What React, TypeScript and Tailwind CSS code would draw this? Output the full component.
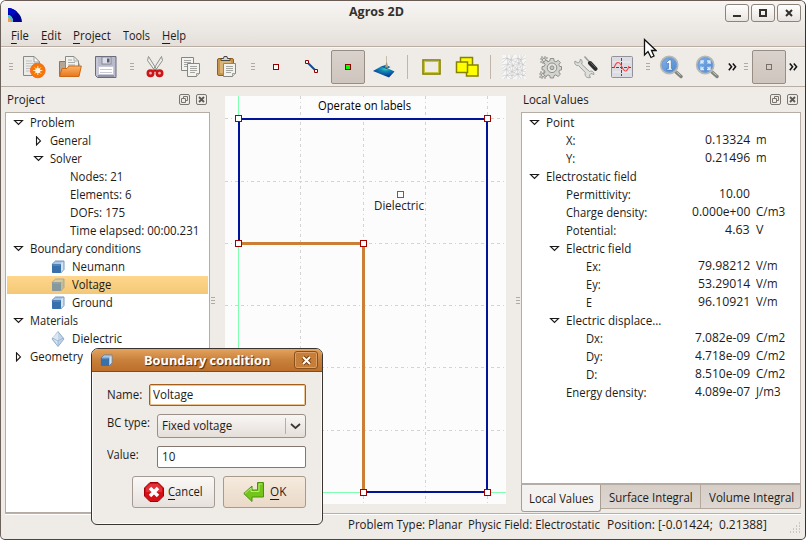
import { useLayoutEffect, useRef, type ReactNode } from "react";

/* Single-line text condensed or stretched horizontally to a given width. */
function T({ w, children, className = "" }: { w: number; children: ReactNode; className?: string }) {
  const ref = useRef<HTMLSpanElement>(null);
  useLayoutEffect(() => {
    const el = ref.current;
    if (el) el.style.transform = `scaleX(${w / el.offsetWidth})`;
  }, [w]);
  return (
    <span className={`inline-block shrink-0 whitespace-pre ${className}`} style={{ width: w }}>
      <span ref={ref} className="inline-block origin-left whitespace-pre">{children}</span>
    </span>
  );
}

const Key = ({ children }: { children: ReactNode }) => (
  <span className="underline decoration-1 underline-offset-[3px]">{children}</span>
);

const Grip = ({ className }: { className: string }) => (
  <div className={`flex shrink-0 items-center ${className}`}>
    <div className="flex w-1 flex-col gap-[2px]">
      <div className="h-px bg-[#b3a9a0]" />
      <div className="h-px bg-[#b3a9a0]" />
      <div className="h-px bg-[#b3a9a0]" />
    </div>
  </div>
);

const Slot = ({ children, pressed }: { children: ReactNode; pressed?: boolean }) => (
  <div className="flex w-9 shrink-0 items-center justify-center">
    {pressed ? (
      <div className="flex h-[34px] w-[34px] items-center justify-center rounded-[2px] border border-[#978d84] bg-linear-to-b from-[#d9d1cb] to-[#cec5be]">{children}</div>
    ) : children}
  </div>
);

const Sep = () => (
  <div className="flex w-[11px] shrink-0 items-center justify-center"><div className="h-6 w-px bg-[#c0b5ab]" /></div>
);

const Doc = ({ x = 0, y = 0, h = 15 }: { x?: number; y?: number; h?: number }) => (
  <g transform={`translate(${x} ${y})`}>
    <path d={`M.5 .5H12.5V${h - 3.5}L9.5 ${h - .5}H.5Z`} fill="#f2f2f0" stroke="#858780" />
    <path d="M3 3.500h7M3 5.500h7M3 7.500h7M3 9.500h5" stroke="#a4a5a1" />
    <path d={`M9.5 ${h - .5}v-3h3`} fill="#d5d6d2" stroke="#858780" strokeWidth=".7" />
  </g>
);

const NewIcon = () => (
  <svg width="24" height="24" viewBox="0 0 24 24">
    <path d="M1.500 1.500H12L17.500 7V20.500H1.500Z" fill="#ebebe9" stroke="#888a85" />
    <path d="M12 1.500V7H17.500Z" fill="#fff" stroke="#888a85" strokeWidth=".8" />
    <path d="M4 6h6M4 8.500h10M4 11h9M4 13.500h8M4 16h8" stroke="#c1c2bf" />
    <circle cx="15.800" cy="15.500" r="7.300" fill="#f57900" stroke="#ff6422" />
    <circle cx="15.800" cy="15.500" r="2.600" fill="#fff4e6" />
    <path d="M15.800 11v9M11.300 15.500h9M12.700 12.400l6.200 6.200M18.900 12.400l-6.200 6.200" stroke="#fff4e6" strokeWidth=".9" />
  </svg>
);
const OpenIcon = () => (
  <svg width="24" height="24" viewBox="0 0 24 24">
    <defs><linearGradient id="fold" x2="0" y2="1"><stop stopColor="#fbb46a" /><stop offset="1" stopColor="#e9751a" /></linearGradient></defs>
    <path d="M1.500 20.500V6.500H7l2 2h12v12Z" fill="#b5a595" stroke="#937454" />
    <path d="M7.500 13V1.500H16L20.500 6v8" fill="#f1f1ef" stroke="#888a85" />
    <path d="M16 1.500V6h4.500M10 5h4M10 7.500h7M10 10h7" fill="none" stroke="#aaaaa6" />
    <path d="M1.500 21.500L4 13.500H9L11 11H23.300L21 21.500Z" fill="url(#fold)" stroke="#cb6915" />
  </svg>
);
const SaveIcon = () => (
  <svg width="24" height="24" viewBox="0 0 24 24">
    <path d="M2 1.500H22V22.500H3.500L1.500 20.500V1.500Z" fill="#b9bacb" stroke="#696a7a" />
    <path d="M3 3V20" stroke="#d7d8e5" />
    <rect x="8" y="2" width="9" height="7" fill="#dddee9" stroke="#77788a" strokeWidth=".8" />
    <rect x="13" y="3.500" width="2.500" height="4" fill="#5a5c70" />
    <rect x="4.500" y="11.500" width="15" height="8" fill="#fff" stroke="#c9c9d5" />
    <path d="M6 14.500h12M6 17.500h12" stroke="#c9c9d5" />
    <path d="M4 21h16" stroke="#84869b" strokeWidth="1.500" />
  </svg>
);
const CutIcon = () => (
  <svg width="24" height="24" viewBox="0 0 24 24">
    <path d="M5.500 1.500L14 15l-2 1L4.500 5.500Z M18.500 1.500L10 15l2 1L19.500 5.500Z" fill="#eeeeec" stroke="#858780" strokeWidth=".9" />
    <g fill="#e8b2b0" stroke="#cc1518" strokeWidth="2.600"><circle cx="7.500" cy="18.200" r="2.700" /><circle cx="16.500" cy="18.200" r="2.700" /></g>
    <path d="M10 16l2-2 2 2-2 1z" fill="#b81114" />
  </svg>
);
const CopyIcon = () => (
  <svg width="24" height="24" viewBox="0 0 24 24"><Doc x={2} y={2} h={14} /><Doc x={8} y={8} h={14} /></svg>
);
const PasteIcon = () => (
  <svg width="24" height="24" viewBox="0 0 24 24">
    <rect x="2.500" y="3.500" width="16" height="17" rx="1.500" fill="#c8954d" stroke="#926018" />
    <path d="M5 6H16V18H5Z" fill="#dbb375" />
    <path d="M6 5.500V3.500H8.500L9 1.500h3l.5 2H15v2Z" fill="#d5d6d2" stroke="#484a46" />
    <Doc x={8} y={8} h={14} />
  </svg>
);
const Node = ({ stroke, fill = "none", s = 6 }: { stroke: string; fill?: string; s?: number }) => (
  <svg width={s} height={s}><rect x=".5" y=".5" width={s - 1} height={s - 1} fill={fill} stroke={stroke} /></svg>
);
const EdgeIcon = () => (
  <svg width="14" height="14"><path d="M3 3l8 8" stroke="#104a8c" strokeWidth="2" /><path d="M.5 .5h3v3h-3zM9.500 9.500h3v3h-3z" fill="#fff" stroke="#920000" /></svg>
);
const SurfaceIcon = () => (
  <svg width="24" height="24" viewBox="0 0 24 24">
    <defs><radialGradient id="surf" cx=".58" cy=".25" r=".6"><stop stopColor="#3ad2bd" /><stop offset=".35" stopColor="#138bb1" /><stop offset="1" stopColor="#06409b" /></radialGradient></defs>
    <path d="M1 16L9 11.500 13 11 14 12.500 22.500 16.500 17 22.500Z" fill="url(#surf)" />
    <path d="M9 11.500l4.500-1.500 5 2-4 2z" fill="#155c99" />
    <path d="M14.300 1h.6v6l1.300 5.500h-3.200l1.300-5.500z" fill="#a8a080" />
  </svg>
);
const RectIcon = () => (
  <svg width="19" height="16"><rect x="1" y="1" width="17" height="14" fill="none" stroke="#858200" strokeWidth="1.600" /><rect x="2.500" y="2.500" width="14" height="11" fill="#efebe7" stroke="#c9c440" /></svg>
);
const LabelsIcon = () => (
  <svg width="24" height="22"><g fill="#ff0" stroke="#858200" strokeWidth="1.500"><rect x="5.500" y="1.500" width="12" height="11" /><rect x="11.500" y="9" width="11.500" height="11" /><rect x="1.500" y="6" width="11" height="10.500" /></g></svg>
);
const MeshIcon = () => (
  <svg width="24" height="24"><rect width="24" height="24" fill="#f6f6f6" />
    <path d="M0 4l5-1 4 2 7-2 3 2 5-2M0 10l6-1 5 2 6-3 7 3M0 16l4-2 6 3 5-3 9 3M0 21l5-1 5 1 6-2 8 2M5 0v3l1 6-2 5 1 6-1 4M9 0v5l2 6-1 6v7M16 0v3l1 5-2 6 1 5v5M19 0v5l2 5-1 6 1 5v3M0 8l5-5 6 8 5-8 5 7 3-4M0 14l6-5 4 8 7-9 3 8 4-3M0 19l4-5 6 7 5-7 6 7 3-3M6 9l3-4 8 3 2-3M4 14l7-3 4 3 6-4M5 20l5-3 6 2 4-3M5 3l4 2 2-5M16 3l3 2 3-5M2 24l3-4 4 4 7-5 3 5" fill="none" stroke="#b9b9b9" strokeWidth=".45" />
  </svg>
);
const GearIcon = () => (
  <svg width="24" height="24" viewBox="0 0 24 24">
    <g fill="#d3d4d0" stroke="#85877f" strokeWidth=".9">
      <path d="M3 2h6v6H3zM2 17h6v6H2z" strokeDasharray="2 1" /><circle cx="6" cy="5" r="1.500" fill="#fff" /><circle cx="5" cy="20" r="1.500" fill="#fff" />
      <path d="M12.300 3.500h3.400l.5 2.600 1.800.8L20.200 5.300l2.200 2.200-1.500 2.200.8 1.800h1.800v3.400l-2 .3-.7 1.800 1.600 2.200-2.400 2.300-2.200-1.600-1.800.8-.5 2.300h-3.200l-.5-2.300-1.800-.8-2.200 1.600-2.300-2.300 1.600-2.200-.8-1.800-2.300-.5v-3l2.300-.5.8-1.800L5.500 7.200 7.800 5l2.200 1.700 1.800-.8Z" />
      <circle cx="14" cy="12.800" r="4.800" fill="#e3e3df" /><circle cx="14" cy="12.800" r="1.900" fill="#c4c5c0" />
    </g>
  </svg>
);
const ToolsIcon = () => (
  <svg width="24" height="24" viewBox="0 0 24 24">
    <path d="M6.500 4C8.500 5.500 8.500 8 7.500 9l8 7.500c2-1 4.500 0 4.500 3l-3-1-1.500 1.500.8 2.500c-4 1-6-2-5-5L4.500 10.500C2 11 0 9 1 6l3 2 1.700-1Z" fill="#dedfdc" stroke="#8b8e88" strokeWidth=".8" />
    <path d="M10.500 1.500l5 5.500" stroke="#9a9d97" strokeWidth="1.600" />
    <path d="M16 8L21.500 13.800" stroke="#2c2e2f" strokeWidth="4" strokeLinecap="round" /><path d="M16.500 7.500l5 5" stroke="#696d6e" strokeWidth=".8" />
  </svg>
);
const ChartIcon = () => (
  <svg width="22" height="22"><rect x=".5" y=".5" width="21" height="21" rx="1" fill="#dcdce3" stroke="#92929d" /><path d="M2 6h18M2 16h18" stroke="#eeeef2" /><path d="M10.500 2v18M1 11.500h20" stroke="#4c4c58" strokeDasharray="3 1" /><path d="M3 12c2-6 5-8 8-1 3 6 5 5 7-1" fill="none" stroke="#f14a4a" strokeWidth="1.100" /></svg>
);
const ZoomIcon = ({ one }: { one?: boolean }) => (
  <svg width="24" height="24" viewBox="0 0 24 24">
    <defs><linearGradient id="lens" x2="1" y2="1"><stop stopColor="#85b4eb" /><stop offset="1" stopColor="#4a84cb" /></linearGradient></defs>
    <path d="M17 17l5 4.500" stroke="#82857d" strokeWidth="3.400" strokeLinecap="round" /><path d="M17.500 16.800l4 3.500" stroke="#c3c5bf" strokeWidth="1" />
    <circle cx="10.200" cy="10" r="8.500" fill="url(#lens)" stroke="#b5b8b3" strokeWidth="1.800" /><circle cx="10.200" cy="10" r="7.200" fill="none" stroke="#6d9cd6" />
    {one ? <path d="M7.500 7.500L10.200 5h2v8.500h1.300V15H8v-1.500h1.700V8L8 9Z" fill="#fff" stroke="#275b9d" strokeWidth=".5" /> :
      <path d="M6 9V6h3M12 6h3v3M15 11.500v3h-3M9 14.500H6v-3M6 6l2.500 2.500M15 6l-2.500 2.500M15 14.500L12.500 12M6 14.500L8.500 12" fill="none" stroke="#d9e8fc" strokeWidth="1.300" />}
  </svg>
);
const More = () => (
  <svg width="9" height="8"><path d="M.8 .5L3.600 3.800.8 7.200M4.800 .5L7.600 3.800 4.800 7.200" fill="none" stroke="#111" strokeWidth="1.500" /></svg>
);

const CubeIcon = ({ dim, s = 14 }: { dim?: boolean; s?: number }) => (
  <svg width={s} height={s} viewBox="0 0 14 14">
    <path d="M1 4.500L4.500 1H13L9.500 4.500Z" fill={dim ? "#dacaa0" : "#a9c7e6"} /><path d="M9.500 4.500L13 1v8.500L9.500 13Z" fill={dim ? "#c4bc99" : "#d3e2f2"} />
    <rect x="1" y="4" width="9" height="9" rx=".8" fill={dim ? "#85999d" : "#3770aa"} /><path d="M2 5h7" stroke={dim ? "#9eaca6" : "#6c9bcb"} />
    <path d="M.8 4.500L4.500 1H13v8.500L9.800 13" fill="none" stroke={dim ? "#91a3a4" : "#5482b0"} strokeWidth=".8" />
  </svg>
);
const DiamondIcon = () => (
  <svg width="14" height="16" viewBox="0 0 14 16"><path d="M7 .5L13 8l-6 7.500L1 8Z" fill="#c1d4e8" stroke="#7e9fc1" strokeWidth=".8" /><path d="M7 1v14L1.500 6Z" fill="#e6eef7" opacity=".7" /><path d="M1.500 7L7 10l5.500-3M7 10v5" fill="none" stroke="#8fafcf" strokeWidth=".8" /></svg>
);
const Arrow = ({ open }: { open: boolean }) => (
  <svg width="11" height="10" viewBox="0 0 11 10"><path d={open ? "M1.500 2.500H9.500L5.500 6.500Z" : "M3.500 .8V9L7.500 4.900Z"} fill="#fff" stroke="#1b1917" strokeWidth="1.100" /></svg>
);

type Row = { pad: string; arrow?: boolean; icon?: "cube" | "dim" | "diamond"; text: string; w: number; sel?: boolean };
const tree: Row[] = [
  { pad: "pl-1.5", arrow: true, text: "Problem", w: 45 },
  { pad: "pl-[26px]", arrow: false, text: "General", w: 41 },
  { pad: "pl-[26px]", arrow: true, text: "Solver", w: 32 },
  { pad: "pl-[63px]", text: "Nodes: 21", w: 53 },
  { pad: "pl-[63px]", text: "Elements: 6", w: 61 },
  { pad: "pl-[63px]", text: "DOFs: 175", w: 55 },
  { pad: "pl-[63px]", text: "Time elapsed: 00:00.231", w: 129 },
  { pad: "pl-1.5", arrow: true, text: "Boundary conditions", w: 111 },
  { pad: "pl-11", icon: "cube", text: "Neumann", w: 53 },
  { pad: "pl-11", icon: "dim", text: "Voltage", w: 39, sel: true },
  { pad: "pl-11", icon: "cube", text: "Ground", w: 41 },
  { pad: "pl-1.5", arrow: true, text: "Materials", w: 48 },
  { pad: "pl-11", icon: "diamond", text: "Dielectric", w: 50 },
  { pad: "pl-1.5", arrow: false, text: "Geometry", w: 53 },
];

type Val = { pad: string; arrow?: boolean; text: string; w: number; val?: string; vw?: number; unit?: string; uw?: number };
const values: Val[] = [
  { pad: "pl-1.5", arrow: true, text: "Point", w: 28 },
  { pad: "pl-[43px]", text: "X:", w: 10, val: "0.13324", vw: 45, unit: "m", uw: 11 },
  { pad: "pl-[43px]", text: "Y:", w: 9, val: "0.21496", vw: 45, unit: "m", uw: 11 },
  { pad: "pl-1.5", arrow: true, text: "Electrostatic field", w: 91 },
  { pad: "pl-[43px]", text: "Permittivity:", w: 65, val: "10.00", vw: 31 },
  { pad: "pl-[43px]", text: "Charge density:", w: 81, val: "0.000e+00", vw: 58, unit: "C/m3", uw: 29 },
  { pad: "pl-[43px]", text: "Potential:", w: 50, val: "4.63", vw: 25, unit: "V", uw: 7 },
  { pad: "pl-[26px]", arrow: true, text: "Electric field", w: 65 },
  { pad: "pl-[63px]", text: "Ex:", w: 15, val: "79.98212", vw: 52, unit: "V/m", uw: 22 },
  { pad: "pl-[63px]", text: "Ey:", w: 15, val: "53.29014", vw: 52, unit: "V/m", uw: 22 },
  { pad: "pl-[63px]", text: "E", w: 6, val: "96.10921", vw: 52, unit: "V/m", uw: 22 },
  { pad: "pl-[26px]", arrow: true, text: "Electric displace...", w: 95 },
  { pad: "pl-[63px]", text: "Dx:", w: 17, val: "7.082e-09", vw: 55, unit: "C/m2", uw: 29 },
  { pad: "pl-[63px]", text: "Dy:", w: 17, val: "4.718e-09", vw: 55, unit: "C/m2", uw: 29 },
  { pad: "pl-[63px]", text: "D:", w: 11, val: "8.510e-09", vw: 55, unit: "C/m2", uw: 29 },
  { pad: "pl-[43px]", text: "Energy density:", w: 80, val: "4.089e-07", vw: 55, unit: "J/m3", uw: 25 },
];

const DockHead = ({ text, w }: { text: string; w: number }) => (
  <div className="flex h-[25px] shrink-0 items-center pr-[3px] pl-[2px]">
    <T w={w}>{text}</T>
    <div className="ml-auto flex gap-1.5">
      <svg width="11" height="11"><rect x=".5" y=".5" width="10" height="10" rx="1.500" fill="none" stroke="#7b756f" /><path d="M2.500 4.500h4v4h-4zM4.500 4V2.500h4v4H7" fill="none" stroke="#7b756f" /></svg>
      <svg width="11" height="11"><rect x=".5" y=".5" width="10" height="10" rx="1.500" fill="none" stroke="#7b756f" /><path d="M3 3l5 5M8 3L3 8" stroke="#5c5752" strokeWidth="1.800" /></svg>
    </div>
  </div>
);

const Model = () => (
  <svg width="281" height="408" viewBox="225 96 281 408" className="block bg-[#fcfcfc]">
    <g stroke="#d3d3d3" strokeDasharray="3 3 3 3 1 3" strokeDashoffset="6" shapeRendering="crispEdges">
      <path d="M300.500 96V504M363.500 96V504M425.500 96V504M487.500 96V504M225 118.500H506M225 181.500H506M225 243.500H506M225 305.500H506M225 367.500H506M225 430.500H506" />
    </g>
    <rect x="305" y="97" width="119" height="19" fill="#fdfdfd" />
    <path d="M238.500 96V504M225 492.500H506" stroke="#80ffb3" shapeRendering="crispEdges" />
    <path d="M239 243V119H487V492H364" fill="none" stroke="#00149b" strokeWidth="2" shapeRendering="crispEdges" />
    <path d="M239 243.500H363.500V492" fill="none" stroke="#cb7f35" strokeWidth="3" shapeRendering="crispEdges" />
    <g fill="#fff" stroke="#a50000">
      <rect x="235.500" y="115.500" width="6" height="6" /><rect x="484.500" y="115.500" width="6" height="6" /><rect x="235.500" y="240.500" width="6" height="6" />
      <rect x="360.500" y="240.500" width="6" height="6" /><rect x="360.500" y="489.500" width="6" height="6" /><rect x="484.500" y="489.500" width="6" height="6" />
      <rect x="397.500" y="191.500" width="6" height="6" stroke="#00a800" />
    </g>
    <g fontFamily="Open Sans, Noto Sans, sans-serif" fontSize="12.500">
      <text x="318" y="110" textLength="93" lengthAdjust="spacingAndGlyphs" fill="#000">Operate on labels</text>
      <text x="374" y="210" textLength="50" lengthAdjust="spacingAndGlyphs" fill="#222">Dielectric</text>
    </g>
  </svg>
);

const WinButton = ({ d }: { d: string }) => (
  <div className="flex h-[18px] w-6 items-center justify-center rounded-[3px] border border-[#8c837b] bg-linear-to-b from-white to-[#e8e3df]">
    <svg width="10" height="10"><path d={d} fill="none" stroke="#34302c" strokeWidth="2" /></svg>
  </div>
);

export default function App() {
  return (
    <div className="relative h-[540px] w-[806px] overflow-hidden bg-white font-['Open_Sans','Noto_Sans',sans-serif] text-[12.5px] leading-[18px] text-[#1d1b19]">
      <div className="flex h-full flex-col rounded-t-[6px] rounded-b-[5px] border border-t-[#685c54] border-r-[#373330] border-b-[#4a4540] border-l-[#6b625b] bg-[#efebe7]">
        <header className="flex h-[45px] shrink-0 flex-col rounded-t-[5px] bg-linear-to-b from-[#f7f5f3] via-[#eeebe7] to-[#e5dfda]">
          <div className="flex h-[23px] items-center pr-1 pl-[7px]">
            <svg width="14" height="14" className="mt-1"><path d="M0 0C7 0 14 7 14 14H5C5 10 3 7 0 7Z" fill="#00008f" /><path d="M0 0c4 0 7 2 9 4L5 8C4 7 2 6 0 6Z" fill="#0009c5" /><path d="M0 7c3 0 5 3 5 7H0z" fill="#3cc6df" /><path d="M0 9c2 0 3 2 3 5H0z" fill="#eea04c" /></svg>
            <T w={55} className="mb-0.5 ml-[327px] font-bold text-[#34302d]">Agros 2D</T>
            <div className="ml-auto flex gap-[2px]">
              <WinButton d="M1 8H9" /><WinButton d="M2 2H8V8H2Z" /><WinButton d="M2 2L8 8M8 2L2 8" />
            </div>
          </div>
          <nav className="flex h-[22px] items-center pt-0.5 pl-[10px]">
            <T w={18}><Key>F</Key>ile</T>
            <T w={20} className="ml-3"><Key>E</Key>dit</T>
            <T w={38} className="ml-3"><Key>P</Key>roject</T>
            <T w={27} className="ml-3">Tools</T>
            <T w={24} className="ml-3"><Key>H</Key>elp</T>
          </nav>
        </header>
        <div className="flex h-[41px] shrink-0 border-y border-[#b9aea4] pl-[8px] shadow-[inset_0_1px_0_#faf8f6]">
          <Grip className="w-[7px]" />
          <Slot><NewIcon /></Slot><Slot><OpenIcon /></Slot><Slot><SaveIcon /></Slot>
          <Grip className="w-[13px] pl-[6px]" />
          <Slot><CutIcon /></Slot><Slot><CopyIcon /></Slot><Slot><PasteIcon /></Slot>
          <Grip className="w-[13px] pl-[6px]" />
          <Slot><Node stroke="#920000" fill="#fff" /></Slot><Slot><EdgeIcon /></Slot>
          <Slot pressed><Node stroke="#920000" fill="#0f0" /></Slot><Slot><SurfaceIcon /></Slot>
          <Sep /><Slot><RectIcon /></Slot><Slot><LabelsIcon /></Slot><Sep />
          <Slot><MeshIcon /></Slot><Slot><GearIcon /></Slot><Slot><ToolsIcon /></Slot><Slot><ChartIcon /></Slot>
          <Grip className="w-[13px] pl-[6px]" />
          <Slot><ZoomIcon one /></Slot><Slot><ZoomIcon /></Slot>
          <div className="flex w-[19px] shrink-0 items-center pl-[3px]"><More /></div>
          <Grip className="w-[7px]" />
          <Slot pressed><Node stroke="#777069" /></Slot>
          <div className="flex w-[14px] shrink-0 items-center pl-[2px]"><More /></div>
        </div>
        <main className="flex h-[426px] shrink-0 pl-1">
          <section className="flex w-[205px] shrink-0 flex-col">
            <DockHead text="Project" w={38} />
            <div className="flex min-h-0 grow flex-col border border-[#b5aca4] bg-white pt-px pl-px">
              {tree.map((r) => (
                <div key={r.text} className={`mr-px flex h-[18px] shrink-0 items-center ${r.pad} ${r.sel ? "bg-linear-to-b from-[#ffd68b] to-[#f3c878]" : ""}`}>
                  {r.arrow !== undefined && <div className="w-[17px] shrink-0"><Arrow open={r.arrow} /></div>}
                  {r.icon && <div className="w-[21px] shrink-0">{r.icon === "diamond" ? <DiamondIcon /> : <CubeIcon dim={r.icon === "dim"} />}</div>}
                  <T w={r.w}>{r.text}</T>
                </div>
              ))}
            </div>
          </section>
          <Grip className="w-[15px] pl-px" />
          <div className="w-[281px] shrink-0 pt-[9px]"><Model /></div>
          <Grip className="w-[15px] pl-[10px]" />
          <section className="flex w-[280px] shrink-0 flex-col">
            <DockHead text="Local Values" w={66} />
            <div className="flex h-[373px] shrink-0 flex-col border border-b-2 border-[#b5aca4] bg-white pt-px pl-px">
              {values.map((r) => (
                <div key={r.text} className={`flex h-[18px] shrink-0 items-center pr-[15px] ${r.pad}`}>
                  {r.arrow !== undefined && <div className="w-[17px] shrink-0"><Arrow open={r.arrow} /></div>}
                  <T w={r.w}>{r.text}</T>
                  {r.val && r.vw && (
                    <div className="mb-0.5 ml-auto flex">
                      <T w={r.vw}>{r.val}</T>
                      <div className="w-[35px] pl-[6px]">{r.unit && r.uw && <T w={r.uw}>{r.unit}</T>}</div>
                    </div>
                  )}
                </div>
              ))}
            </div>
            <div className="flex items-start">
              <div className="flex h-[27px] w-20 items-center justify-center rounded-b-[3px] border border-t-0 border-[#a99d92] bg-[#f4f2f0] pt-0.5"><T w={65}>Local Values</T></div>
              <div className="flex h-6 w-[100px] items-center justify-center border border-t-0 border-l-0 border-[#b5a99e] bg-linear-to-b from-[#d6cec7] to-[#ded7d2] pt-0.5"><T w={84}>Surface Integral</T></div>
              <div className="flex h-6 w-[100px] items-center justify-center rounded-br-[3px] border border-t-0 border-l-0 border-[#b5a99e] bg-linear-to-b from-[#d6cec7] to-[#ded7d2] pt-0.5 pl-0.5"><T w={85}>Volume Integral</T></div>
            </div>
          </section>
        </main>
        <footer className="mr-1 ml-1 flex grow items-center border-t border-[#bab0a7] pb-1 pl-[343px] shadow-[inset_0_1px_0_#fff]">
          <T w={114}>Problem Type: Planar</T>
          <T w={132} className="ml-[6px]">Physic Field: Electrostatic</T>
          <T w={160} className="ml-[7px]">Position: [-0.01424;  0.21388]</T>
          <svg width="12" height="12" className="mt-1 ml-auto"><path d="M1 11h11M4 8h8M7 5h5M10 2h2" stroke="#aaa098" strokeDasharray="1 2" /></svg>
        </footer>
      </div>

      <div className="absolute top-[348px] left-[91px] flex h-[177px] w-[232px] flex-col rounded-t-[7px] rounded-b-[6px] border border-[#39342f] bg-[#efebe7] shadow-[inset_0_0_0_1px_#fbfaf8]">
        <div className="flex h-[23px] shrink-0 items-center rounded-t-[6px] border-b border-[#834d1b] bg-linear-to-b from-[#e5a35d] via-[#c8813b] via-50% to-[#bd6f2a] pl-2">
          <CubeIcon s={13} />
          <T w={126} className="mb-px ml-[31px] text-[13px] font-bold text-white [text-shadow:1px_1px_1px_#4b290c]">Boundary condition</T>
          <div className="mr-1 ml-auto flex h-[18px] w-6 items-center justify-center rounded-[3px] border border-[#8a501c] bg-[#c77e38] shadow-[inset_0_0_0_1px_#dba069]">
            <svg width="11" height="11"><path d="M2 2l7 7M9 2L2 9" stroke="#75400f" strokeWidth="4" /><path d="M2 2l7 7M9 2L2 9" stroke="#fff" strokeWidth="2" /></svg>
          </div>
        </div>
        <div className="flex flex-col pt-3 pr-4 pl-[15px]">
          <div className="flex h-[22px] items-center justify-between">
            <T w={35}>Name:</T>
            <div className="flex h-[22px] w-[157px] items-center rounded-[2px] border border-[#a45f1d] bg-white pl-[3px] shadow-[inset_0_0_0_1px_#ecc393]"><T w={40}>Voltage</T></div>
          </div>
          <div className="mt-2 flex h-6 justify-between">
            <T w={43}>BC type:</T>
            <div className="flex h-6 w-[149px] items-center rounded-[3px] border border-[#9a9087] bg-linear-to-b from-[#f8f6f4] to-[#e5dfda] pl-1">
              <T w={70}>Fixed voltage</T>
              <div className="ml-auto flex h-4 w-5 items-center justify-center border-l border-[#b8aea4]"><svg width="11" height="7"><path d="M1 1l4.500 4L10 1" fill="none" stroke="#3b3733" strokeWidth="1.700" /></svg></div>
            </div>
          </div>
          <div className="mt-2 flex h-[22px] justify-between">
            <T w={32}>Value:</T>
            <div className="flex h-[22px] w-[149px] items-center rounded-[2px] border border-[#82786f] bg-white pl-1"><T w={13}>10</T></div>
          </div>
          <div className="mt-2 flex justify-end gap-2">
            <button className="flex h-8 w-[83px] items-center rounded-[3px] border border-[#a49a91] bg-linear-to-b from-[#faf9f7] to-[#e7e1dc] pl-[11px]">
              <svg width="20" height="20"><path d="M6 .5h8L19.500 6v8L14 19.500H6L.5 14V6Z" fill="#d40f16" stroke="#a80008" /><path d="M2 6l4-4h8l4 4v4H2z" fill="#ed555a" opacity=".5" /><path d="M6 6l8 8M14 6l-8 8" stroke="#fff" strokeWidth="3.500" /></svg>
              <T w={35} className="ml-1"><Key>C</Key>ancel</T>
            </button>
            <button className="flex h-8 w-[83px] items-center rounded-[3px] border border-[#a99a89] bg-linear-to-b from-[#f5ebde] to-[#ead9c7] pl-[19px]">
              <svg width="22" height="22"><path d="M.8 12.500L9 5v4h5.500V1.500h6V16H9v4.500Z" fill="#73c51b" stroke="#4b920b" /><path d="M2 12.500L8 7v3.500h8V3h3" fill="none" stroke="#b9eb70" /></svg>
              <T w={16} className="ml-[5px]"><Key>O</Key>K</T>
            </button>
          </div>
        </div>
      </div>

      <svg width="14" height="21" className="absolute top-[38px] left-[643px]"><path d="M1.500 1.500V17L5 13.500 8 19.500 11 18 8.500 12.500H13Z" fill="#fff" stroke="#111" strokeWidth="1.300" /></svg>
    </div>
  );
}
